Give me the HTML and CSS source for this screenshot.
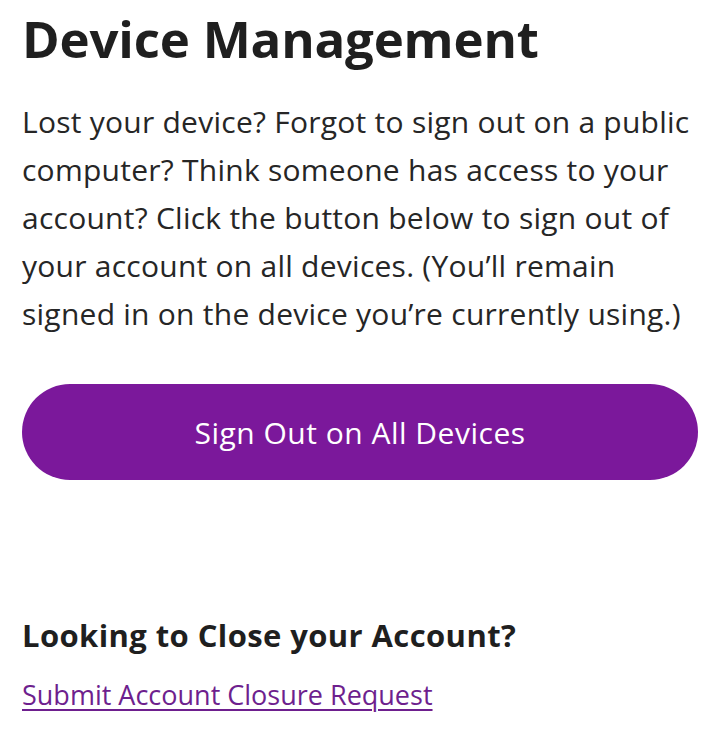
FILE: index.html
```html
<!DOCTYPE html>
<html lang="en">
<head>
<meta charset="utf-8">
<title>Device Management</title>
<link rel="stylesheet" href="styles.css">
</head>
<body>
<main class="page">
  <h1 class="title">Device Management</h1>
  <p class="intro">Lost your device? Forgot to sign out on a public computer? Think someone has access to your account? Click the button below to sign out of your account on all devices. (You’ll remain signed in on the device you’re currently using.)</p>
  <button class="signout" type="button">Sign Out on All Devices</button>
  <h2 class="subtitle">Looking to Close your Account?</h2>
  <a class="closure" href="#">Submit Account Closure Request</a>
</main>
</body>
</html>
```
FILE: styles.css
```css
html, body {
  margin: 0;
  padding: 0;
  background: #ffffff;
}
.page {
  padding: 0 22px;
  font-family: "Open Sans", "Noto Sans", sans-serif;
  color: #222222;
  display: flex;
  flex-direction: column;
  align-items: stretch;
}
.title {
  margin: 0;
  padding-top: 6px;
  font-size: 51px;
  line-height: 64px;
  font-weight: 700;
  letter-spacing: -0.2px;
  color: #1f1f1f;
}
.intro {
  margin: 28px 0 0;
  font-size: 30px;
  line-height: 48px;
  font-weight: 400;
  letter-spacing: 0.25px;
  color: #262626;
}
.signout {
  margin-top: 46px;
  height: 96px;
  border: none;
  border-radius: 48px;
  background: #7b189b;
  color: #ffffff;
  font-family: inherit;
  font-size: 30px;
  letter-spacing: 0.5px;
  cursor: pointer;
}
.subtitle {
  margin: 133px 0 0;
  font-size: 31px;
  line-height: 44px;
  font-weight: 700;
  letter-spacing: 0.4px;
  color: #1f1f1f;
}
.closure {
  align-self: flex-start;
  margin-top: 18px;
  font-size: 27px;
  line-height: 40px;
  color: #6e1f8e;
  text-decoration: underline;
  text-underline-offset: 4px;
  text-decoration-thickness: 2px;
}
```
